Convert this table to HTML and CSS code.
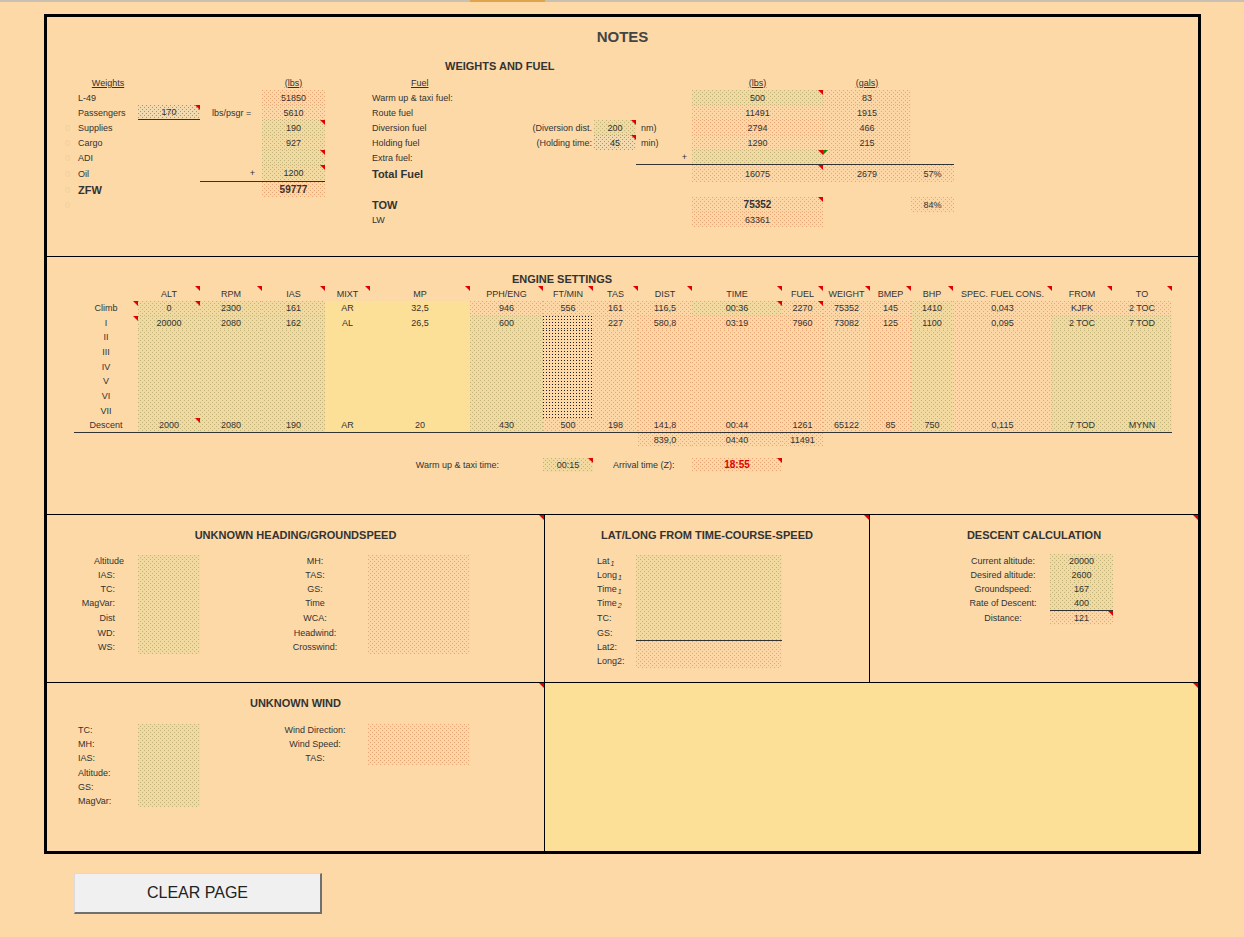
FILE: index.html
```html
<!DOCTYPE html>
<html>
<head>
<meta charset="utf-8">
<link rel="stylesheet" href="styles.css">
</head>
<body>
<div class="topbar"><div class="tab"></div></div>
<div class="sheet">
  <section class="s1">
    <h1 class="notes">NOTES</h1>
    <h2 class="wf">WEIGHTS AND FUEL</h2>
    <div class="wrow">
      <div class="wgrid">
        <div></div><div class="c"><span class="u">Weights</span></div><div></div><div></div><div class="c"><span class="u">(lbs)</span></div>
        <div></div><div class="c l">L-49</div><div></div><div></div><div class="c r">51850</div>
        <div></div><div class="c l">Passengers</div><div class="c k t bb">170</div><div class="c l pl12">lbs/psgr =</div><div class="c r">5610</div>
        <div class="c rt z">0</div><div class="c l">Supplies</div><div></div><div></div><div class="c g t">190</div>
        <div class="c rt z">0</div><div class="c l">Cargo</div><div></div><div></div><div class="c g">927</div>
        <div class="c rt z">0</div><div class="c l">ADI</div><div></div><div></div><div class="c g t"></div>
        <div class="c rt z">0</div><div class="c l">Oil</div><div></div><div class="c rt pr7 bb">+</div><div class="c g t bb">1200</div>
        <div class="c rt z">0</div><div class="c l bl">ZFW</div><div></div><div></div><div class="c r b">59777</div>
        <div class="c rt z">0</div><div></div><div></div><div></div><div></div>
        <div></div><div></div><div></div><div></div><div></div>
      </div>
      <div class="fgrid">
        <div class="c l pl39"><span class="u">Fuel</span></div><div></div><div></div><div></div><div class="c"><span class="u">(lbs)</span></div><div class="c"><span class="u">(gals)</span></div><div></div>
        <div class="c l">Warm up &amp; taxi fuel:</div><div></div><div></div><div></div><div class="c g t">500</div><div class="c r">83</div><div></div>
        <div class="c l">Route fuel</div><div></div><div></div><div></div><div class="c r">11491</div><div class="c r">1915</div><div></div>
        <div class="c l">Diversion fuel</div><div class="c rt pr2">(Diversion dist.</div><div class="c g t">200</div><div class="c l pl5">nm)</div><div class="c r">2794</div><div class="c r">466</div><div></div>
        <div class="c l">Holding fuel</div><div class="c rt pr2">(Holding time:</div><div class="c k t">45</div><div class="c l pl5">min)</div><div class="c r">1290</div><div class="c r">215</div><div></div>
        <div class="c l">Extra fuel:</div><div></div><div></div><div class="c rt pr5 bb">+</div><div class="c g t bb"></div><div class="c r gt bb"></div><div class="c bb"></div>
        <div class="c l bl">Total Fuel</div><div></div><div></div><div></div><div class="c r t">16075</div><div class="c r">2679</div><div class="c r">57%</div>
        <div></div><div></div><div></div><div></div><div></div><div></div><div></div>
        <div class="c l bl">TOW</div><div></div><div></div><div></div><div class="c r t b">75352</div><div></div><div class="c r">84%</div>
        <div class="c l">LW</div><div></div><div></div><div></div><div class="c r">63361</div><div></div><div></div>
      </div>
    </div>
  </section>

  <section class="s2">
    <h2 class="es">ENGINE SETTINGS</h2>
    <div class="egrid">
      <div></div><div class="c t">ALT</div><div class="c t">RPM</div><div class="c t">IAS</div><div class="c t">MIXT</div><div class="c t">MP</div><div class="c t">PPH/ENG</div><div class="c t">FT/MIN</div><div class="c t">TAS</div><div class="c t">DIST</div><div class="c t">TIME</div><div class="c t">FUEL</div><div class="c t">WEIGHT</div><div class="c t">BMEP</div><div class="c t">BHP</div><div class="c t">SPEC. FUEL CONS.</div><div class="c t">FROM</div><div class="c t">TO</div>

      <div class="c t">Climb</div><div class="c g t">0</div><div class="c g">2300</div><div class="c g">161</div><div class="c y">AR</div><div class="c y">32,5</div><div class="c r">946</div><div class="c r">556</div><div class="c r">161</div><div class="c r">116,5</div><div class="c g t">00:36</div><div class="c r t">2270</div><div class="c r">75352</div><div class="c r">145</div><div class="c g">1410</div><div class="c r">0,043</div><div class="c r">KJFK</div><div class="c r">2 TOC</div>

      <div class="c t">I</div><div class="c g">20000</div><div class="c g">2080</div><div class="c g">162</div><div class="c y">AL</div><div class="c y">26,5</div><div class="c g">600</div><div class="c d"></div><div class="c r">227</div><div class="c r">580,8</div><div class="c r">03:19</div><div class="c r">7960</div><div class="c r">73082</div><div class="c r">125</div><div class="c g">1100</div><div class="c r">0,095</div><div class="c g">2 TOC</div><div class="c g">7 TOD</div>

      <div class="sp6 rl"><div>II</div><div>III</div><div>IV</div><div>V</div><div>VI</div><div>VII</div></div>
      <div class="sp6 g"></div><div class="sp6 g"></div><div class="sp6 g"></div><div class="sp6 y"></div><div class="sp6 y"></div><div class="sp6 g"></div><div class="sp6 d"></div><div class="sp6 r"></div><div class="sp6 r"></div><div class="sp6 r"></div><div class="sp6 r"></div><div class="sp6 r"></div><div class="sp6 r"></div><div class="sp6 g"></div><div class="sp6 r"></div><div class="sp6 g"></div><div class="sp6 g"></div>

      <div class="c bb">Descent</div><div class="c g t bb">2000</div><div class="c g bb">2080</div><div class="c g bb">190</div><div class="c y bb">AR</div><div class="c y bb">20</div><div class="c g bb">430</div><div class="c r bb">500</div><div class="c r bb">198</div><div class="c r bb">141,8</div><div class="c r bb">00:44</div><div class="c r bb">1261</div><div class="c r bb">65122</div><div class="c r bb">85</div><div class="c g bb">750</div><div class="c r bb">0,115</div><div class="c g bb">7 TOD</div><div class="c g bb">MYNN</div>

      <div class="span9"></div><div class="c r">839,0</div><div class="c r">04:40</div><div class="c r">11491</div><div class="span6"></div>

      <div class="full"></div>

      <div class="span5"></div><div class="c rt span2 pr44">Warm up &amp; taxi time:</div><div class="c g t">00:15</div><div class="c l span2 pl20">Arrival time (Z):</div><div class="c r t arr">18:55</div><div class="span7"></div>
    </div>
  </section>

  <div class="s3">
    <div class="pa pt">
      <div class="ptitle">UNKNOWN HEADING/GROUNDSPEED</div>
      <div class="pbody">
        <div class="col w91 tr pr23">
          <div><span class="alt">Altitude</span></div><div>IAS:</div><div>TC:</div><div>MagVar:</div><div class="h16">Dist</div><div>WD:</div><div>WS:</div>
        </div>
        <div class="g bx62 h99"></div>
        <div class="w62"></div>
        <div class="col w106 tc">
          <div>MH:</div><div>TAS:</div><div>GS:</div><div>Time</div><div class="h16">WCA:</div><div>Headwind:</div><div>Crosswind:</div>
        </div>
        <div class="r bx102 h99"></div>
      </div>
    </div>
    <div class="pb pt">
      <div class="ptitle">LAT/LONG FROM TIME-COURSE-SPEED</div>
      <div class="pbody">
        <div class="w52"></div>
        <div class="col w39">
          <div>Lat<span class="sb">1</span></div><div>Long<span class="sb">1</span></div><div>Time<span class="sb">1</span></div><div class="h15">Time<span class="sb">2</span></div><div class="h15">TC:</div><div>GS:</div><div>Lat2:</div><div>Long2:</div>
        </div>
        <div class="col w146">
          <div class="g llg"></div>
          <div class="r llr"></div>
        </div>
      </div>
    </div>
    <div class="pc pt">
      <div class="ptitle">DESCENT CALCULATION</div>
      <div class="pbody">
        <div class="w90"></div>
        <div class="col w86 tc">
          <div>Current altitude:</div><div>Desired altitude:</div><div>Groundspeed:</div><div class="h15">Rate of Descent:</div><div>Distance:</div>
        </div>
        <div class="w4"></div>
        <div class="col w63 tc">
          <div class="g">20000</div><div class="g">2600</div><div class="g">167</div><div class="g bb h15">400</div><div class="r t">121</div>
        </div>
      </div>
    </div>
  </div>

  <div class="s4">
    <div class="pa pt">
      <div class="ptitle">UNKNOWN WIND</div>
      <div class="pbody mt13">
        <div class="w31"></div>
        <div class="col w60">
          <div>TC:</div><div>MH:</div><div class="h15">IAS:</div><div>Altitude:</div><div>GS:</div><div>MagVar:</div>
        </div>
        <div class="g bx62 h83"></div>
        <div class="w62"></div>
        <div class="col w106 tc">
          <div>Wind Direction:</div><div>Wind Speed:</div><div class="h15">TAS:</div>
        </div>
        <div class="r bx102 h41"></div>
      </div>
    </div>
    <div class="pe pt"></div>
  </div>
</div>
<button class="clear">CLEAR PAGE</button>
</body>
</html>
```
FILE: styles.css
```css
body {
  margin: 0;
  background: #FCD9A7;
  font-family: "Liberation Sans", Arial, sans-serif;
  font-size: 9px;
  color: #333;
}
.topbar { display: flex; height: 2px; background: #C9C0B3; }
.tab { margin-left: 470px; width: 75px; background: #E0A44E; }

.sheet {
  margin: 12px 0 0 44px;
  width: 1157px;
  box-sizing: border-box;
  border: 3px solid #000;
}

/* ---------- section 1 ---------- */
.s1 { height: 229px; padding-top: 10px; border-bottom: 1px solid #000; }
.notes {
  margin: 0;
  font-size: 15px;
  line-height: 20px;
  text-align: center;
  font-weight: bold;
  color: #444;
}
.wf {
  margin: 12px 0 0 398px;
  font-size: 11px;
  line-height: 14px;
  font-weight: bold;
  color: #333;
}
.wrow { display: flex; margin-top: 2px; }
.wgrid {
  display: grid;
  grid-template-columns: 31px 60px 62px 62px 63px;
  grid-template-rows: 15px 15px 15px 15px 15px 15px 17px 15px 15px 15px;
}
.fgrid {
  margin-left: 47px;
  display: grid;
  grid-template-columns: 158px 64px 42px 56px 131px 88px 43px;
  grid-template-rows: 15px 15px 15px 15px 15px 15px 17px 15px 15px 15px;
}

.c {
  display: flex;
  align-items: center;
  justify-content: center;
  position: relative;
  white-space: nowrap;
  min-width: 0;
}
.l { justify-content: flex-start; }
.rt { justify-content: flex-end; }
.u { text-decoration: underline; }
.bb { border-bottom: 1px solid #333; box-sizing: border-box; }
.b { font-weight: bold; font-size: 10px; }
.bl { font-weight: bold; font-size: 11px; }
.z { color: #F2CF9C; padding-right: 8px; }
.pl12 { padding-left: 12px; }
.pl5 { padding-left: 5px; }
.pl20 { padding-left: 20px; }
.pl39 { padding-left: 39px; }
.pr2 { padding-right: 2px; }
.pr5 { padding-right: 5px; }
.pr7 { padding-right: 7px; }
.pr44 { padding-right: 44px; }

/* patterns */
.g, .r, .k, .d {
  background-image:
    conic-gradient(at 1px 1px, transparent 270deg, var(--dot) 0),
    conic-gradient(at 1px 1px, transparent 270deg, var(--dot) 0);
  background-size: 4px 4px;
  background-position: 0 0, 2px 2px;
  background-color: var(--bg);
}
.g { --dot: #C0B47C; --bg: #F2D99F; }
.r { --dot: #E8A676; --bg: #FCD6A5; }
.k { --dot: #9A968C; --bg: #F2D9AE; }
.d { --dot: #222; --bg: #FCD9A7; background-size: 3px 3px; background-position: 0 0, 0 0; }
.y { background: #FCE098; }

/* comment markers */
.t::after, .pt::after {
  content: "";
  position: absolute;
  top: 0;
  right: 0;
  border-top: 5px solid #E00000;
  border-left: 5px solid transparent;
}
.gt::before {
  content: "";
  position: absolute;
  top: 0;
  left: 0;
  border-top: 5px solid #138A00;
  border-right: 5px solid transparent;
}

/* ---------- section 2 ---------- */
.s2 { height: 242px; padding-top: 15px; border-bottom: 1px solid #000; }
.es {
  margin: 0 0 0 415px;
  width: 200px;
  text-align: center;
  font-size: 11px;
  line-height: 14px;
  font-weight: bold;
  color: #333;
}
.egrid {
  margin-left: 27px;
  display: grid;
  grid-template-columns: 64px 62px 62px 63px 45px 100px 73px 50px 45px 54px 90px 41px 47px 41px 42px 99px 60px 60px;
  grid-template-rows: 15px repeat(9, 14.67px) 14px 11px 14px;
}
.sp6 { grid-row: span 6; }
.rl { display: flex; flex-direction: column; }
.rl > div { height: 14.67px; line-height: 14.67px; text-align: center; }
.span2 { grid-column: span 2; }
.span5 { grid-column: span 5; }
.span6 { grid-column: span 6; }
.span7 { grid-column: span 7; }
.span9 { grid-column: span 9; }
.full { grid-column: 1 / -1; }
.arr { color: #E00000; font-weight: bold; font-size: 10px; }

/* ---------- sections 3 / 4 ---------- */
.s3 { display: flex; height: 167px; border-bottom: 1px solid #000; }
.s4 { display: flex; height: 168px; }
.pa { width: 497px; border-right: 1px solid #000; position: relative; }
.pb { width: 324px; border-right: 1px solid #000; position: relative; }
.pc { width: 328px; position: relative; }
.pe { width: 653px; background: #FCE098; position: relative; }

.ptitle {
  margin-top: 13px;
  line-height: 14px;
  font-size: 11px;
  font-weight: bold;
  text-align: center;
  color: #333;
}
.pbody { display: flex; margin-top: 12px; }
.mt13 { margin-top: 13px; }
.col { display: flex; flex-direction: column; }
.col > div { height: 14px; line-height: 14px; white-space: nowrap; position: relative; box-sizing: border-box; }
.col > .h15 { height: 15px; line-height: 15px; }
.col > .h16 { height: 16px; line-height: 16px; }
.col > .bb.h15 { line-height: 14px; }
.tr { text-align: right; }
.tc { text-align: center; }
.pr23 { padding-right: 23px; }
.alt { margin-right: -9px; }

.w4 { width: 4px; }
.w31 { width: 31px; }
.w39 { width: 39px; }
.w52 { width: 52px; }
.w60 { width: 60px; }
.w62 { width: 62px; }
.w63 { width: 63px; }
.w86 { width: 86px; }
.w90 { width: 90px; }
.w91 { width: 91px; box-sizing: border-box; }
.w106 { width: 106px; }
.w146 { width: 146px; }

.bx62 { width: 62px; margin-top: 1px; }
.bx102 { width: 102px; margin-top: 1px; }
.h99 { height: 99px; }
.h83 { height: 83px; }
.h41 { height: 41px; }
.col > .llg { height: 86px; margin-top: 1px; border-bottom: 1px solid #333; }
.col > .llr { height: 27px; }

.sb {
  font-size: 7px;
  font-style: italic;
  vertical-align: -2px;
  margin-left: 1px;
}

.clear {
  display: block;
  margin: 19px 0 0 74px;
  width: 248px;
  height: 41px;
  background: #F0F0F0;
  border: 1px solid #DADADA;
  border-right: 2px solid #707070;
  border-bottom: 2px solid #707070;
  font-family: "Liberation Sans", Arial, sans-serif;
  font-size: 16px;
  color: #222;
  padding: 0;
}
```
